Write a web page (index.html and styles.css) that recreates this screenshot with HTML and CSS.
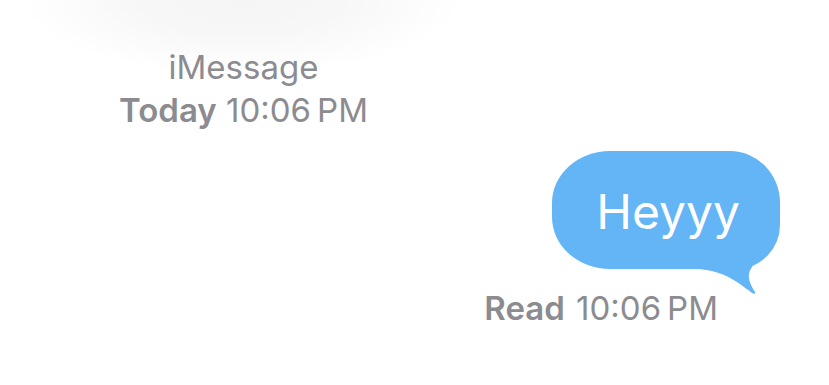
FILE: index.html
```html
<!DOCTYPE html>
<html>
<head>
<meta charset="utf-8">
<link rel="stylesheet" href="styles.css">
</head>
<body>
<div class="page">
  <div class="header">
    <div class="service">iMessage</div>
    <div class="stamp"><b>Today</b> 10:06&#8239;PM</div>
  </div>
  <div class="row">
    <div class="bubble">
      <span class="bubble-text">Heyyy</span>
      <svg class="tail" width="85" height="62" viewBox="0 0 85 62">
        <path d="M0 33 C 15 33, 30 38, 42 46 C 48 50, 53 54, 57 57 Q 61 59, 60 56 C 56 50, 53 44, 54 38 C 55 31, 62 25, 68 19 C 72 15, 76 10, 78 5 L 0 5 Z" fill="#64b5f6"/>
      </svg>
    </div>
  </div>
  <div class="receipt"><b>Read</b> 10:06&#8239;PM</div>
</div>
</body>
</html>
```
FILE: styles.css
```css
html, body {
  margin: 0;
  padding: 0;
  background: #ffffff;
}
.page {
  width: 829px;
  height: 385px;
  overflow: hidden;
  background: radial-gradient(ellipse 220px 75px at 242px 0px, #f5f5f5 0%, #f7f7f7 45%, #fcfcfc 80%, #ffffff 100%);
  font-family: Inter, "Noto Sans", sans-serif;
  color: #8b8b90;
}
.header {
  width: 487px;
  padding-top: 46px;
  text-align: center;
  font-size: 33px;
  line-height: 43px;
}
.header b, .receipt b {
  font-weight: 600;
}
.row {
  display: flex;
  justify-content: flex-end;
  padding-right: 49px;
  margin-top: 19px;
}
.bubble {
  position: relative;
  display: flex;
  align-items: center;
  box-sizing: border-box;
  height: 118px;
  padding: 3px 40px 0 44px;
  background: #64b5f6;
  border-radius: 58px 50px 44px 58px / 52px 52px 44px 52px;
}
.bubble-text {
  position: relative;
  z-index: 1;
  color: #ffffff;
  font-size: 48px;
  line-height: 48px;
}
.tail {
  position: absolute;
  right: 0;
  bottom: -29px;
}
.receipt {
  margin-top: 18px;
  padding-right: 111px;
  text-align: right;
  font-size: 33px;
  line-height: 43px;
  word-spacing: 2px;
}
```
